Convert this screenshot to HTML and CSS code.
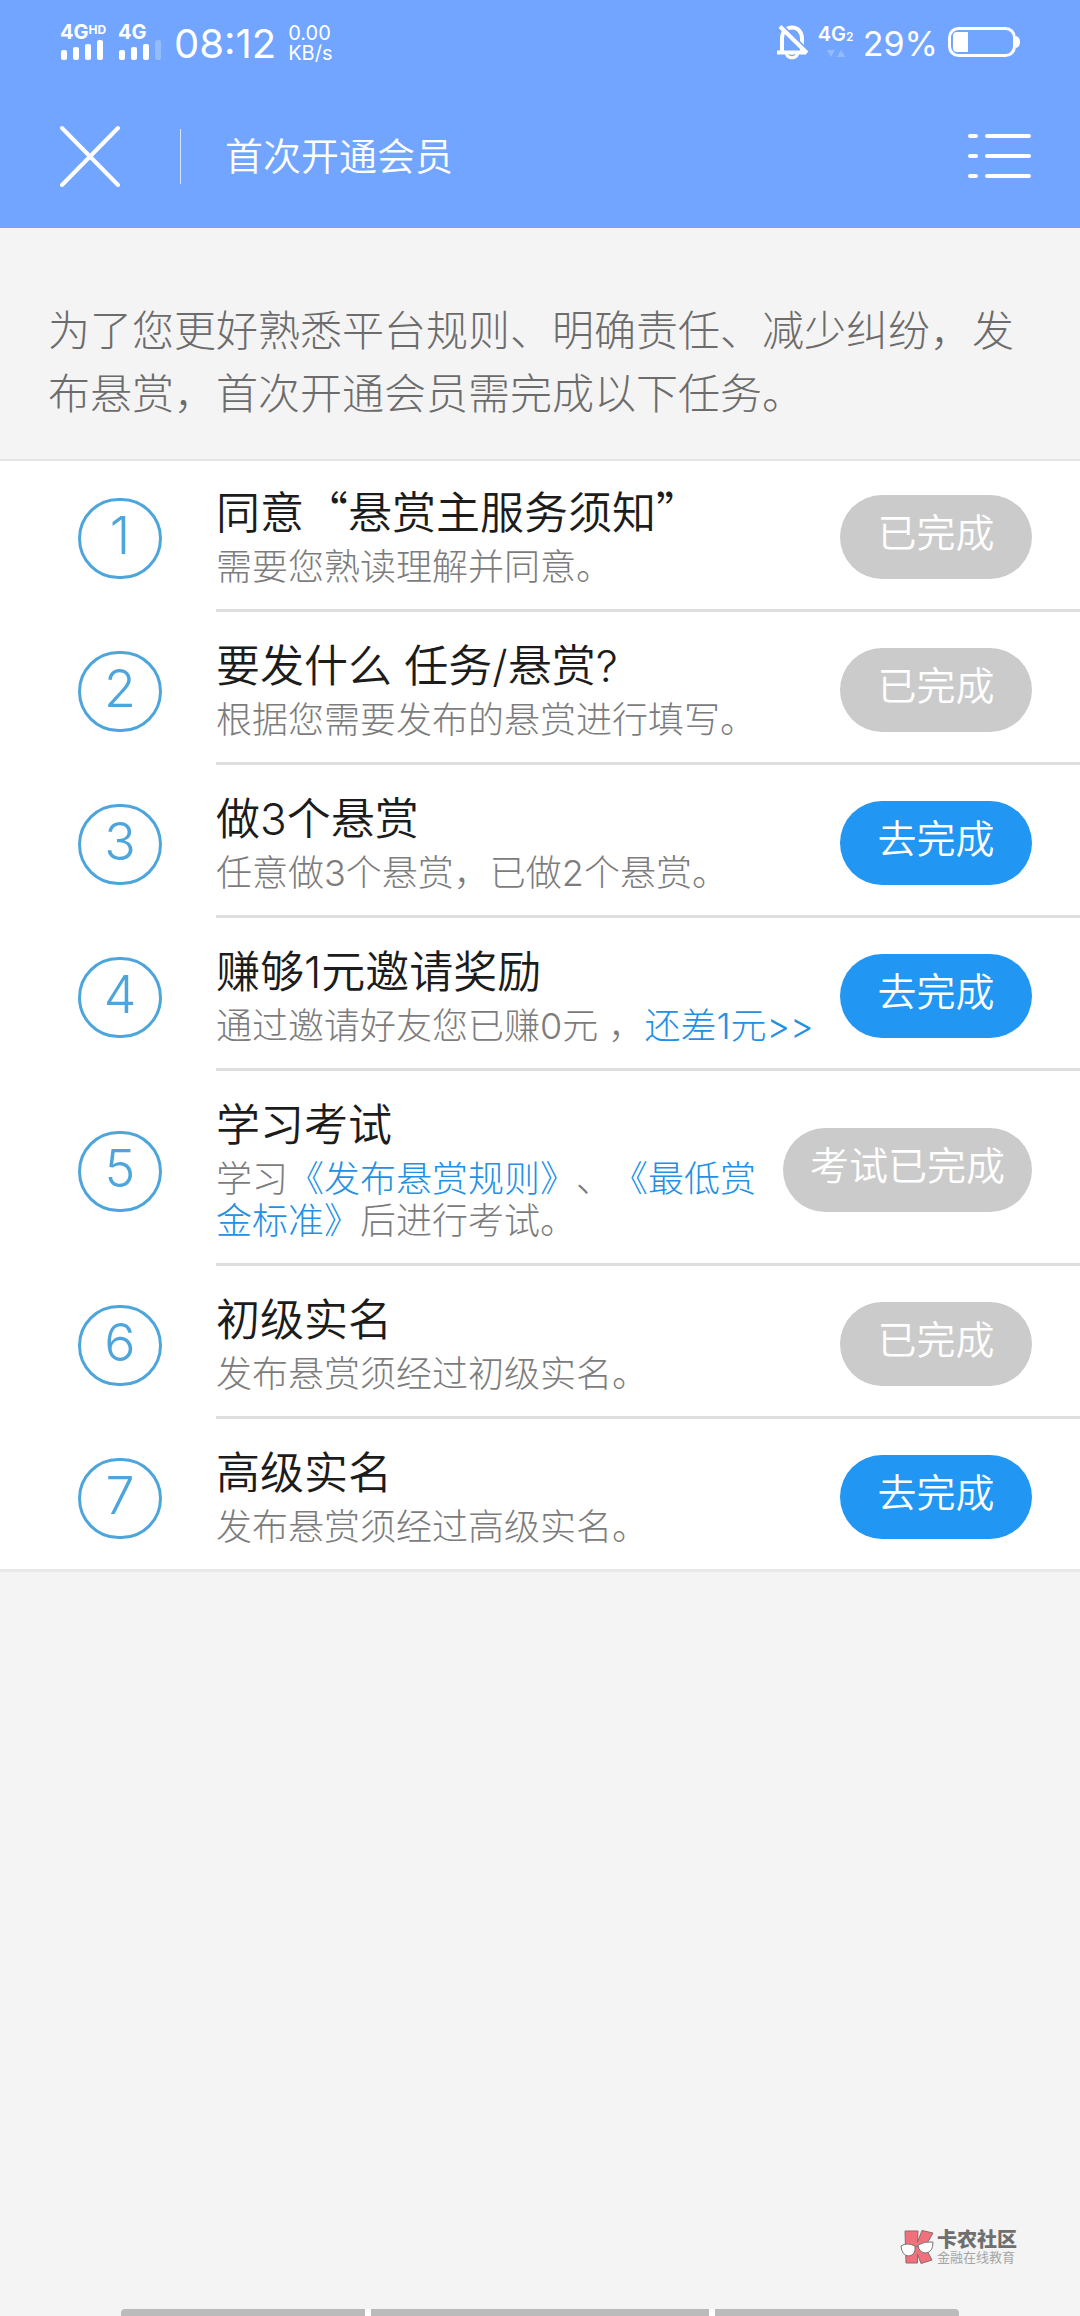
FILE: index.html
```html
<!DOCTYPE html>
<html lang="zh-CN">
<head>
<meta charset="utf-8">
<meta name="viewport" content="width=device-width, initial-scale=1">
<title>首次开通会员</title>
<link rel="stylesheet" href="styles.css">
</head>
<body>
<header class="top">
  <div class="status">
    <div class="signal">
      <span class="net">4G<sup>HD</sup></span>
      <svg width="44" height="20" viewBox="0 0 44 20" fill="#fff" aria-hidden="true"><rect x="1" y="10" width="6" height="10" rx="2"/><rect x="13" y="7" width="6" height="13" rx="2"/><rect x="25" y="4" width="6" height="16" rx="2"/><rect x="37" y="0" width="6" height="20" rx="2"/></svg>
    </div>
    <div class="signal">
      <span class="net">4G</span>
      <svg width="44" height="20" viewBox="0 0 44 20" fill="#fff" aria-hidden="true"><rect x="1" y="10" width="6" height="10" rx="2"/><rect x="13" y="7" width="6" height="13" rx="2"/><rect x="25" y="4" width="6" height="16" rx="2"/><rect x="37" y="0" width="6" height="20" rx="2" opacity=".25"/></svg>
    </div>
    <time class="clock">08:12</time>
    <div class="speed"><span>0.00</span><span>KB/s</span></div>
    <svg class="bell" width="32" height="36" viewBox="0 0 32 36" fill="none" stroke="#fff" aria-hidden="true"><path d="M5 28V14.500C5 8 9 3.500 15 3.500S25 8 25 14.500V28" stroke-width="4"/><path d="M0 28.500H29" stroke-width="4"/><path d="M8 30C9 37 21 37 22 30Z" fill="#fff" stroke="none"/><path d="M12 30.500Q15 32.500 18 30.500" stroke="#72a5ff" stroke-width="1.500"/><path d="M5.500 1L32 27.500" stroke="#72a5ff" stroke-width="2"/><path d="M3 2.500L30 29" stroke-width="4"/></svg>
    <div class="signal data">
      <span class="net thin">4G<sub>2</sub></span>
      <svg width="18" height="8" viewBox="0 0 18 8" fill="#fff" opacity=".25" aria-hidden="true"><path d="M0 0H8L4 7ZM10 7H18L14 0Z"/></svg>
    </div>
    <span class="percent">29%</span>
    <svg width="74" height="32" viewBox="0 0 74 32" aria-hidden="true"><rect x="2.500" y="2.500" width="65" height="27" rx="9" fill="none" stroke="#fff" stroke-width="3"/><path d="M10 6H21V26H10Q6 26 6 22V10Q6 6 10 6ZM69 10Q73 11 73 16T69 22Z" fill="#fff"/></svg>
  </div>
  <div class="appbar">
    <button class="icon-btn" type="button" aria-label="关闭"><svg width="62" height="62" viewBox="0 0 62 62" fill="none" stroke="#fff" stroke-width="4" stroke-linecap="round"><path d="M3 3L59 60M59 3L3 60"/></svg></button>
    <span class="bar-line"></span>
    <h1>首次开通会员</h1>
    <button class="icon-btn menu" type="button" aria-label="菜单"><svg width="64" height="44" viewBox="0 0 64 44" fill="none" stroke="#fff" stroke-width="4" stroke-linecap="round"><path d="M2 2H8M19 2H61M2 22H8M19 22H61M2 42H8M19 42H61"/></svg></button>
  </div>
</header>
<main>
  <p class="intro">为了您更好熟悉平台规则、明确责任、减少纠纷，发布悬赏，首次开通会员需完成以下任务。</p>
  <ol class="tasks">
    <li><span class="num">1</span><div class="body"><div class="text"><h2>同意<span class="quote">“</span>悬赏主服务须知<span class="quote">”</span></h2><p>需要您熟读理解并同意。</p></div><button class="pill done" type="button">已完成</button></div></li>
    <li><span class="num">2</span><div class="body"><div class="text"><h2>要发什么 任务/悬赏?</h2><p>根据您需要发布的悬赏进行填写。</p></div><button class="pill done" type="button">已完成</button></div></li>
    <li><span class="num">3</span><div class="body"><div class="text"><h2>做3个悬赏</h2><p>任意做3个悬赏，已做2个悬赏。</p></div><button class="pill" type="button">去完成</button></div></li>
    <li><span class="num">4</span><div class="body"><div class="text"><h2>赚够1元邀请奖励</h2><p>通过邀请好友您已赚0元 ，<a href="#invite">还差1元&gt;&gt;</a></p></div><button class="pill" type="button">去完成</button></div></li>
    <li><span class="num">5</span><div class="body"><div class="text"><h2>学习考试</h2><p>学习<a href="#rules">《发布悬赏规则》</a>、<a href="#standard">《最低赏金标准》</a>后进行考试。</p></div><button class="pill done" type="button">考试已完成</button></div></li>
    <li><span class="num">6</span><div class="body"><div class="text"><h2>初级实名</h2><p>发布悬赏须经过初级实名。</p></div><button class="pill done" type="button">已完成</button></div></li>
    <li><span class="num">7</span><div class="body"><div class="text"><h2>高级实名</h2><p>发布悬赏须经过高级实名。</p></div><button class="pill" type="button">去完成</button></div></li>
  </ol>
</main>
<footer>
  <div class="brand">
    <svg width="34" height="36" viewBox="0 0 34 36" aria-hidden="true"><path d="M5 2H18L17.500 13L22 1.500L33 4L25 18L32 31L21 34.500L17.500 25V34H6Z" fill="#f0717b" stroke="#8a6a6c" stroke-width="1"/><path d="M1 17Q7 13 15 17Q16 26 9 27Q2 27 1 17ZM18 16Q25 12 33 13Q33 23 26 24Q19 24 18 16Z" fill="#fff" stroke="#777" stroke-width="1"/><path d="M15 18L18 17" stroke="#777" fill="none"/></svg>
    <div class="brand-text"><strong>卡农社区</strong><span>金融在线教育</span></div>
  </div>
  <div class="gesture"><span></span><span class="mid"></span><span></span></div>
</footer>
</body>
</html>
```
FILE: styles.css
```css
* { box-sizing: border-box; }
body {
  margin: 0;
  min-height: 100vh;
  display: flex;
  flex-direction: column;
  background: #f4f4f4;
  font-family: Inter, "Noto Sans CJK SC", sans-serif;
  font-weight: 300;
  text-spacing-trim: space-all;
}
h1, h2, p, ol { margin: 0; padding: 0; font-weight: 300; }
button { border: 0; padding: 0; background: none; font: inherit; color: #fff; }
svg { display: block; flex: none; }
main { flex: 1; }

.top { background: #72a5ff; color: #fff; }
.status {
  height: 84px;
  padding: 0 59px 0 60px;
  display: flex;
  align-items: center;
  font-weight: 400;
}
.signal { width: 44px; margin-right: 14px; }
.net { display: block; height: 16px; font-size: 20px; line-height: 16px; font-weight: 700; white-space: nowrap; }
.net sup, .net sub { font-size: 12px; line-height: 0; }
.net sup { vertical-align: 5px; }
.net sub { vertical-align: 0; }
.thin { font-weight: 600; }
.clock { font-size: 40px; line-height: 48px; margin: 4px 12px 0 -2px; }
.speed { display: flex; flex-direction: column; font-size: 20px; line-height: 20px; margin-top: 2px; }
.bell { margin-left: auto; }
.data { width: 36px; margin: 0 9px; }
.data svg { margin: 8px auto 0; }
.percent { font-size: 34px; line-height: 40px; margin: 4px 9px 0 0; }

.appbar { height: 144px; padding: 0 48px 0 59px; display: flex; align-items: center; }
.bar-line { width: 1px; height: 55px; margin: 0 44px 0 59px; background: #d5e4ff; }
.appbar h1 { font-size: 38px; line-height: 48px; font-weight: 350; }
.menu { margin-left: auto; }

.intro { padding: 71px 48px 34px; font-size: 42px; line-height: 63px; color: #6c6c6c; }

.tasks {
  list-style: none;
  background: #fff;
  box-shadow: inset 0 2px #e6e6e6, inset 0 -3px #e8e8e8;
}
.tasks li { display: flex; align-items: stretch; gap: 54px; padding-left: 78px; }
.num {
  flex: none;
  align-self: center;
  width: 84px;
  height: 81px;
  margin-top: 6px;
  padding-bottom: 6px;
  border: 3px solid #4da5dc;
  border-radius: 42px;
  display: flex;
  align-items: center;
  justify-content: center;
  font-size: 52px;
  line-height: 60px;
  color: #4da5dc;
}
.body {
  flex: 1;
  display: flex;
  align-items: center;
  gap: 20px;
  padding: 24px 48px 21px 0;
  border-bottom: 3px solid #dedede;
}
.tasks li:last-child .body { border-color: transparent; }
.text { flex: 1; }
.text h2 { font-size: 44px; line-height: 60px; font-weight: 350; color: #1c1c1c; }
.quote { font-family: "Noto Sans CJK SC", sans-serif; line-height: 0; }
.text p { margin-top: 3px; font-size: 36px; line-height: 42px; color: #7c7c7c; }
.text a { color: #2490e4; text-decoration: none; }
.pill {
  flex: none;
  min-width: 192px;
  height: 84px;
  margin-top: 3px;
  padding: 0 27px 9px;
  border-radius: 42px;
  background: #2196f3;
  font-size: 39px;
  line-height: 48px;
  font-weight: 350;
}
.done { background: #cbcbcb; }

.brand { display: flex; justify-content: flex-end; gap: 3px; padding: 0 63px 44px 0; }
.brand-text { display: flex; flex-direction: column; padding-top: 1px; color: #a5a5a5; font-size: 13px; line-height: 15px; font-weight: 400; }
.brand-text strong { color: #6f6f6f; font-size: 20px; line-height: 20px; font-weight: 900; }
.gesture { display: flex; gap: 6px; margin: 0 121px; height: 7px; background: #fff; border-radius: 4px 4px 0 0; overflow: hidden; }
.gesture span { flex: 244; background: #bbb; }
.gesture .mid { flex: 338; }
```
